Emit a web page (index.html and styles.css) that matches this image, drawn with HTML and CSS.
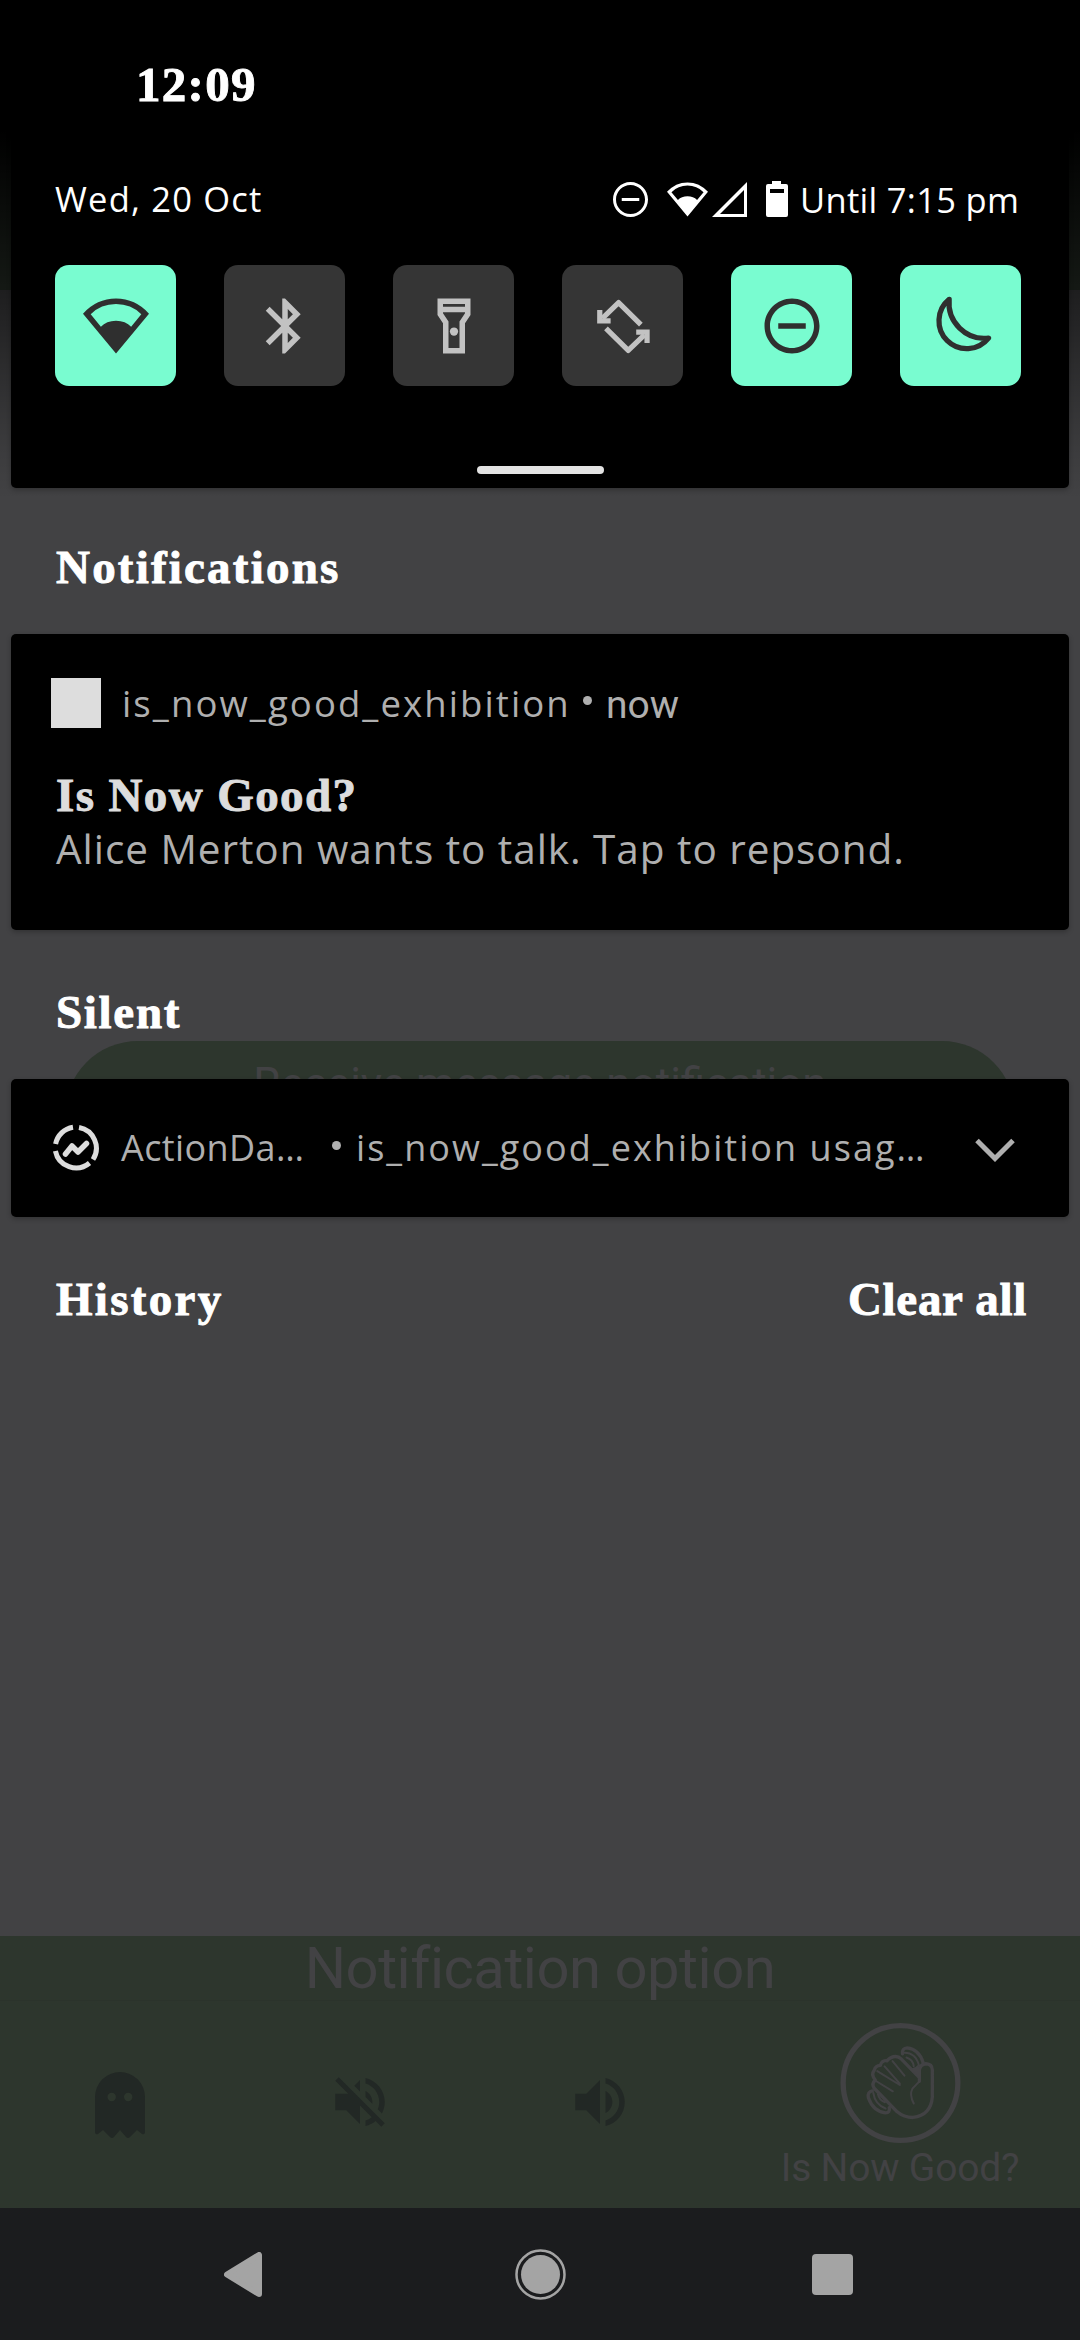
FILE: index.html
```html
<!DOCTYPE html>
<html lang="en">
<head>
<meta charset="utf-8">
<title>Notification shade</title>
<link rel="stylesheet" href="styles.css">
</head>
<body>
<div class="screen">
  <div class="app">
    <div class="app-bar"></div>
    <div class="app-content">
      <div class="pill">Receive message notification</div>
    </div>
    <div class="options">
      <div class="options-title"><span>Notification option</span></div>
      <div class="options-row">
        <div class="option"><svg class="ghost" viewBox="0 0 50 66"><path fill-rule="evenodd" d="M0 25a25 25 0 0 1 50 0v35q0 3-3 2l-5-4-7 7q-2 2-4 0l-6-7-6 7q-2 2-4 0l-7-7-5 4q-3 1-3-2zM12.500 25a4.200 4.200 0 1 0 8.400 0 4.200 4.200 0 1 0-8.400 0zM29 25a4.200 4.200 0 1 0 8.400 0 4.200 4.200 0 1 0-8.400 0z"/></svg></div>
        <div class="option"><svg class="volume" viewBox="0 0 24 24"><path d="M16.500 12c0-1.770-1.020-3.290-2.500-4.030v2.210l2.450 2.450c.03-.2.05-.41.05-.63zm2.500 0c0 .94-.2 1.820-.54 2.640l1.510 1.510C20.630 14.910 21 13.500 21 12c0-4.280-2.990-7.860-7-8.770v2.060c2.890.86 5 3.540 5 6.710zM4.270 3L3 4.270 7.730 9H3v6h4l5 5v-6.730l4.250 4.250c-.67.52-1.420.93-2.250 1.180v2.060c1.380-.31 2.630-.95 3.690-1.810L19.730 21 21 19.730l-9-9L4.270 3zM12 4L9.910 6.090 12 8.180V4z"/></svg></div>
        <div class="option"><svg class="volume" viewBox="0 0 24 24"><path d="M3 9v6h4l5 5V4L7 9H3zm13.500 3c0-1.770-1.020-3.290-2.500-4.030v8.050c1.480-.73 2.500-2.250 2.500-4.020zM14 3.230v2.060c2.890.86 5 3.540 5 6.710s-2.110 5.850-5 6.710v2.060c4.010-.91 7-4.490 7-8.770s-2.990-7.860-7-8.770z"/></svg></div>
        <div class="option option-wide">
          <svg class="wave" viewBox="-2 64 364 368" fill="none">
            <circle cx="180" cy="248" r="173" stroke-width="16"/>
            <g stroke-width="10" stroke-linecap="round" stroke-linejoin="round">
              <path d="M237 243V208Q240 191 257 190Q275 191 276 208V290Q272 345 218 352Q190 352 170 335L100 263Q92 250 104 239Q90 222 101 209Q104 196 119 195Q124 178 139 181Q151 168 165 168Q175 168 182 175L237 232"/>
              <path d="M186 160Q184 143 200 142Q236 146 248 186"/>
              <path d="M95 272Q80 274 83 292Q98 334 135 338Q149 338 146 322"/>
            </g>
            <g stroke-width="6" stroke-linecap="round">
              <path d="M156 182L192 226M132 198L178 250M110 212L178 254M106 242L157 273"/>
              <path d="M237 243L216 265Q206 283 220 310"/>
              <path d="M192 157Q226 157 236 196M198 171Q217 177 220 197M98 278Q103 313 135 325M112 282Q116 300 133 306"/>
            </g>
            <path class="solid" d="M211 203Q224 205 232 194L238 202V238Z"/>
          </svg>
          <span class="option-label">Is Now Good?</span>
        </div>
      </div>
    </div>
    <div class="nav">
      <svg class="nav-back" viewBox="0 0 39 45"><path d="M35 3v39L3 22.500z" stroke-width="6" stroke-linejoin="round"/></svg>
      <svg class="nav-home" viewBox="0 0 51 51"><circle cx="25.500" cy="25.500" r="19.500"/><circle class="ring" cx="25.500" cy="25.500" r="24"/></svg>
      <span class="nav-recents"></span>
    </div>
  </div>

  <div class="shade">
    <header class="quick">
      <div class="clock">12:09</div>
      <div class="status">
        <span class="date">Wed, 20 Oct</span>
        <div class="status-icons">
          <svg class="st-dnd" viewBox="2 2 20 20"><path d="M12 2C6.480 2 2 6.480 2 12s4.480 10 10 10 10-4.480 10-10S17.520 2 12 2zm0 18.300c-4.580 0-8.300-3.720-8.300-8.300S7.420 3.700 12 3.700s8.300 3.720 8.300 8.300-3.720 8.300-8.300 8.300zM7 11.200h10v1.700H7z"/></svg>
          <svg class="st-wifi" viewBox="0 2 24 20"><path fill-rule="evenodd" d="M12 2Q5 2 0 7.500L12 22 24 7.500Q19 2 12 2zM12 3.800Q17.500 3.800 21.400 7.700L17.600 12.300Q15.500 10.100 12 10.100T6.400 12.300L2.600 7.700Q6.500 3.800 12 3.800z"/></svg>
          <svg class="st-signal" viewBox="0 0 35 35"><path fill-rule="evenodd" d="M35 0v35H0zM32 8v24H8z"/></svg>
          <svg class="st-battery" viewBox="0 0 22 36"><path fill-rule="evenodd" d="M6 0h9v3h5q2 0 2 2v29q0 2-2 2H2q-2 0-2-2V5q0-2 2-2h4zM4 8v4h14V8z"/></svg>
          <span class="until">Until 7:15 pm</span>
        </div>
      </div>
      <div class="tiles">
        <div class="tile on"><svg viewBox="0 0 24 24"><path fill-rule="evenodd" d="M12 2Q5 2 0 7.500L12 22 24 7.500Q19 2 12 2zM12 4Q17.500 4 21.200 7.700L17.500 12.300Q15.500 10.100 12 10.100T6.500 12.300L2.800 7.700Q6.500 4 12 4z"/></svg></div>
        <div class="tile"><svg viewBox="0 0 24 24"><path d="M17.710 7.710L12 2h-1v7.590L6.410 5 5 6.410 10.590 12 5 17.590 6.410 19 11 14.410V22h1l5.710-5.710-4.300-4.290 4.300-4.290zM13 5.830l1.880 1.880L13 9.590V5.830zm1.880 10.460L13 18.170v-3.760l1.880 1.880z"/></svg></div>
        <div class="tile"><svg viewBox="0 0 24 24"><path fill-rule="evenodd" d="M6 2h12v6l-2 3v11H8V11L6 8zM8 4v1h8V4zM8 7v.4l2 3V20h4v-9.600l2-3V7z"/><circle cx="12" cy="14" r="1.500"/></svg></div>
        <div class="tile"><svg viewBox="0 0 24 24"><g id="turn"><path d="M4.500 9.200L10.400 3.500L18.500 11.500" fill="none" class="line"/><path d="M2.600 6.200h1.900v3h3v1.900H2.600z"/></g><use href="#turn" transform="rotate(180 12.150 12.200)"/></svg></div>
        <div class="tile on"><svg viewBox="0 0 24 24"><path d="M12 2C6.480 2 2 6.480 2 12s4.480 10 10 10 10-4.480 10-10S17.520 2 12 2zm0 18c-4.410 0-8-3.590-8-8s3.590-8 8-8 8 3.590 8 8-3.590 8-8 8zM7 11h10v2H7z"/></svg></div>
        <div class="tile on"><svg viewBox="0 0 24 24"><path class="line" fill="none" d="M7.700 2.300A10.100 10.100 0 1 0 22 16.400A12.900 12.900 0 0 1 7.700 2.300z"/></svg></div>
      </div>
      <div class="handle"></div>
    </header>

    <h2 class="section first">Notifications</h2>
    <article class="card">
      <div class="card-head">
        <span class="app-square"></span>
        <span class="app-name">is_now_good_exhibition</span>
        <span class="dot"></span>
        <span class="time">now</span>
      </div>
      <h3 class="card-title">Is Now Good?</h3>
      <p class="card-text">Alice Merton wants to talk. Tap to repsond.</p>
    </article>

    <h2 class="section second">Silent</h2>
    <article class="card silent">
      <svg class="dash" viewBox="0 0 48 48" fill="none"><g stroke-width="5"><path d="M27 3.500A21 21 0 0 1 41 35.500M37.500 39A21 21 0 0 1 3.400 27M3.600 20A21 21 0 0 1 21 3.300"/></g><path stroke-width="5.500" stroke-linecap="round" stroke-linejoin="round" d="M13.500 30L20 22L26 28L34.500 19.500"/></svg>
      <span class="silent-app">ActionDa…</span>
      <span class="dot"></span>
      <span class="silent-text">is_now_good_exhibition usag…</span>
      <svg class="chevron" viewBox="0 0 40 24" fill="none"><path d="M2 2.500L20 20.500L38 2.500" stroke-width="5"/></svg>
    </article>

    <footer class="actions"><span class="history">History</span><span class="clear">Clear all</span></footer>
  </div>
</div>
</body>
</html>
```
FILE: styles.css
```css
* { box-sizing: border-box; margin: 0; padding: 0; }
body { width: 1080px; height: 2340px; background: #424244; overflow: hidden; }
svg { display: block; flex: none; }
span { white-space: nowrap; }
.screen { display: grid; width: 1080px; height: 2340px; font-family: Roboto, "Liberation Sans", sans-serif; }
.app, .shade { grid-area: 1 / 1; min-width: 0; }

/* dimmed application behind the shade */
.app { display: flex; flex-direction: column; color: #424244; }
.app-bar { height: 290px; background: #2d362d; }
.app-content { flex: 1; padding: 751px 65px 0; }
.pill { height: 146px; border-radius: 73px; background: #2d362d; text-align: center; font-size: 44px; line-height: 87px; letter-spacing: 0; }
.options { height: 272px; background: #2d362d; }
.options-title { height: 65px; border-bottom: 1px solid #2b332b; text-align: center; font-size: 58px; line-height: 64px; letter-spacing: -.5px; }
.options-row { display: flex; height: 207px; }
.option { width: 240px; display: flex; justify-content: center; align-items: center; padding-bottom: 6px; fill: #222825; }
.option-wide { width: 360px; flex-direction: column; justify-content: flex-start; padding: 21px 0 0; }
.option-label { font-size: 39px; line-height: 46px; margin-top: 1px; letter-spacing: -.2px; }
.ghost { width: 50px; height: 66px; margin-top: 6px; }
.volume { width: 66px; height: 66px; margin-bottom: 0; }
.wave { width: 121px; height: 122px; stroke: #424244; fill: none; }
.wave .solid { fill: #424244; stroke: none; }
.nav { height: 132px; background: #1b1c1e; display: flex; align-items: center; padding-left: 224px; }
.nav-back { width: 39px; height: 45px; fill: #a4a4a4; stroke: #a4a4a4; }
.nav-home { width: 51px; height: 51px; fill: #a4a4a4; margin: 0 246px 0 252px; }
.nav-home .ring { fill: none; stroke: #a4a4a4; stroke-width: 2.500; }
.nav-recents { width: 41px; height: 41px; border-radius: 4px; background: #a4a4a4; }

/* notification shade */
.shade { background: linear-gradient(#000 0, #000 130px, rgba(0,0,0,.55) 290px, rgba(0,0,0,.1) 450px, rgba(0,0,0,0) 500px) no-repeat; }
.quick { height: 488px; margin: 0 11px; background: #000; border-radius: 0 0 5px 5px; padding: 0 44px; color: #fff; box-shadow: 0 2px 5px rgba(0,0,0,.25); }
.clock, .section, .card-title, .actions { font-family: "Liberation Serif", serif; font-weight: 700; font-size: 47px; -webkit-text-stroke: .9px currentColor; }
.clock { padding: 58px 0 0 81px; height: 170px; line-height: 54px; font-size: 49px; letter-spacing: 1.300px; }
.status, .app-name, .card-text, .silent { font-family: "Open Sans", "Noto Sans", sans-serif; }
.status { display: flex; justify-content: space-between; height: 95px; padding-right: 7px; font-size: 34.500px; line-height: 57px; }
.date { letter-spacing: 1.200px; }
.status-icons { display: flex; height: 58px; align-items: center; fill: #fff; }
.st-dnd { width: 35px; height: 35px; margin-right: 19px; }
.st-wifi { width: 41px; height: 35px; margin-right: 4px; }
.st-signal { width: 35px; height: 35px; margin-right: 19px; }
.st-battery { width: 22px; height: 36px; margin-right: 12px; }
.until { width: 218px; letter-spacing: .300px; }
.tiles { display: flex; gap: 48px; }
.tile { width: 121px; height: 121px; border-radius: 14px; background: #353535; display: grid; place-items: center; fill: #c2c2c2; stroke: none; }
.tile svg { width: 66px; height: 66px; overflow: visible; }
.tile .line { fill: none; stroke: #c2c2c2; stroke-width: 1.900; stroke-linejoin: round; }
.tile.on { background: #79fcd0; fill: #2f2f2f; }
.tile.on .line { stroke: #2f2f2f; }
.handle { width: 127px; height: 8px; border-radius: 4px; background: #e3e3e3; margin: 80px auto 0; }
.section { color: #fff; line-height: 54px; padding-left: 56px; }
.section.first { height: 146px; padding-top: 52px; letter-spacing: 2.200px; }
.section.second { height: 149px; padding-top: 55px; letter-spacing: 1.700px; }
.card { margin: 0 11px; height: 296px; background: #000; border-radius: 5px; padding: 44px 40px 0; color: #afafaf; box-shadow: 0 2px 5px rgba(0,0,0,.25); }
.card-head { display: flex; align-items: center; height: 50px; font-size: 36.500px; line-height: 50px; }
.app-square { width: 50px; height: 50px; background: #ddd; }
.app-name { margin-left: 21px; width: 461px; letter-spacing: 2.100px; }
.dot { width: 9px; height: 9px; border-radius: 5px; background: #afafaf; flex: none; margin-top: -5px; }
.time { margin-left: 14px; font-size: 39px; padding-top: 4px; }
.card-title { color: #ddd; line-height: 54px; padding: 40px 0 0 5px; letter-spacing: 1.400px; }
.card-text { font-size: 40.500px; line-height: 54px; padding-left: 5px; letter-spacing: .950px; white-space: nowrap; }
.silent { height: 138px; padding: 0 54px 0 41px; display: flex; align-items: center; font-size: 36px; line-height: 48px; }
.dash { width: 48px; height: 48px; stroke: #ddd; }
.silent-app { margin-left: 21px; width: 211px; letter-spacing: .400px; }
.silent-text { margin-left: 15px; letter-spacing: 2.050px; }
.chevron { width: 40px; height: 24px; margin-left: auto; margin-top: 4px; stroke: #afafaf; }
.actions { display: flex; justify-content: space-between; padding: 55px 53px 0 56px; line-height: 54px; color: #fff; }
.history { letter-spacing: 2.300px; }
.clear { letter-spacing: .700px; }
```
